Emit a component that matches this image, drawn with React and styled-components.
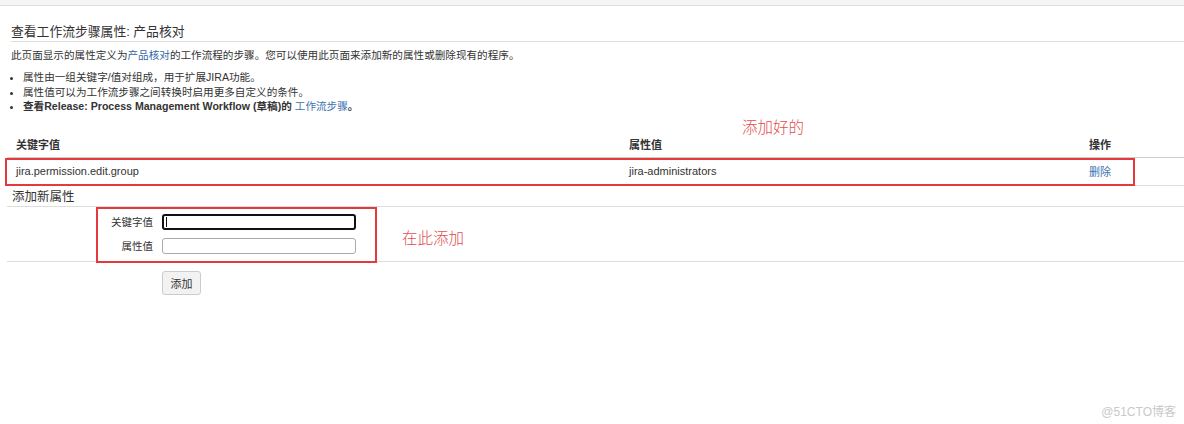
import React from "react";
import styled, { createGlobalStyle } from "styled-components";

const GlobalStyle = createGlobalStyle`
  html, body { margin: 0; padding: 0; background: #fff; }
  body {
    font-family: "Liberation Sans", Arial, "Noto Sans CJK SC", sans-serif;
    color: #333;
    font-size: 11px;
  }
  * { box-sizing: border-box; }
`;

const Screen = styled.div`
  position: relative;
  min-height: 424px;
  overflow: hidden;
`;

const TopBar = styled.div`
  height: 6px;
  background: #f4f4f4;
  border-bottom: 1px solid #dedede;
`;

const Content = styled.div`
  padding-left: 7px;
`;

const Title = styled.h2`
  margin: 17px 0 0 4px;
  font-size: 12.8px;
  font-weight: normal;
  line-height: 18px;
  color: #333;
  border-bottom: 1px solid #ddd;
`;

const Desc = styled.p`
  margin: 6px 0 0 4px;
  font-size: 10.6px;
  line-height: 14px;
`;

const Link = styled.a`
  color: ${(p) => (p.$dark ? "#2f66a8" : "#3b73af")};
  text-decoration: none;
  font-weight: normal;
`;

const List = styled.ul`
  margin: 8px 0 0 0;
  padding-left: 16px;
  font-size: 10.6px;
  line-height: 14.5px;
`;

const Item = styled.li`
  font-weight: ${(p) => (p.$bold ? "bold" : "normal")};
`;

const TableWrap = styled.div`
  position: relative;
  margin-top: 17px;
`;

const Row = styled.div`
  position: relative;
  display: grid;
  grid-template-columns: 614px 460px 1fr;
  height: ${(p) => (p.$head ? "27px" : "28px")};
  align-items: center;
  border-bottom: 1px solid ${(p) => (p.$head ? "#ccc" : "#ddd")};
`;

const Cell = styled.div`
  padding-left: ${(p) => (p.$first ? "9px" : "8px")};
  font-size: 11px;
  font-weight: ${(p) => (p.$head ? "bold" : "normal")};
  white-space: nowrap;
`;

const RedBox = styled.div`
  position: absolute;
  border: 2px solid #e6393e;
  pointer-events: none;
`;

const Note = styled.span`
  position: absolute;
  font-size: 15.5px;
  line-height: 20px;
  color: #e24c50;
  white-space: nowrap;
  font-family: "Noto Sans CJK SC", sans-serif;
  font-weight: 300;
`;

const SectionTitle = styled.h3`
  margin: 0;
  padding: 2px 0 0 5px;
  height: 21px;
  font-size: 12.5px;
  font-weight: normal;
  line-height: 18px;
  border-bottom: 1px solid #ddd;
`;

const Form = styled.div`
  position: relative;
  display: flex;
  flex-direction: column;
  gap: 8px;
  padding: 7px 0 7px;
  border-bottom: 1px solid #ddd;
`;

const FieldRow = styled.div`
  display: flex;
  align-items: center;
  gap: 9px;
`;

const Label = styled.label`
  width: 146px;
  text-align: right;
  font-size: 10.5px;
  line-height: 16px;
`;

const InputWrap = styled.div`
  position: relative;
  width: 194px;
  height: 16px;
`;

const Input = styled.input`
  width: 100%;
  height: 100%;
  margin: 0;
  padding: 0 4px;
  font: inherit;
  border: ${(p) => (p.$focused ? "2px solid #111" : "1px solid #aaa")};
  border-radius: 3px;
  outline: none;
  background: #fff;
`;

const Caret = styled.span`
  position: absolute;
  left: 4px;
  top: 3px;
  width: 1px;
  height: 10px;
  background: #111;
`;

const Actions = styled.div`
  padding: 9px 0 0 155px;
`;

const Button = styled.button`
  width: 39px;
  height: 24px;
  padding: 0;
  font-family: "Liberation Sans", "Noto Sans CJK SC", sans-serif;
  font-size: 11px;
  color: #333;
  background: #f2f2f2;
  border: 1px solid #ccc;
  border-radius: 3px;
`;

const Watermark = styled.div`
  position: absolute;
  right: 8px;
  bottom: 5px;
  font-size: 12px;
  color: #c9c9c9;
  font-family: "Liberation Sans", "Noto Sans CJK SC", sans-serif;
`;

export default function App() {
  return (
    <Screen>
      <GlobalStyle />
      <TopBar />
      <Content>
        <Title>查看工作流步骤属性: 产品核对</Title>
        <Desc>
          此页面显示的属性定义为<Link $dark href="#">产品核对</Link>的工作流程的步骤。您可以使用此页面来添加新的属性或删除现有的程序。
        </Desc>
        <List>
          <Item>属性由一组关键字/值对组成，用于扩展JIRA功能。</Item>
          <Item>属性值可以为工作流步骤之间转换时启用更多自定义的条件。</Item>
          <Item $bold>
            查看Release: Process Management Workflow (草稿)的{" "}
            <Link href="#">工作流步骤</Link>。
          </Item>
        </List>
        <TableWrap>
          <Note style={{ left: 735, top: -15 }}>添加好的</Note>
          <Row $head>
            <Cell $head $first>关键字值</Cell>
            <Cell $head>属性值</Cell>
            <Cell $head>操作</Cell>
          </Row>
          <Row>
            <Cell $first>jira.permission.edit.group</Cell>
            <Cell>jira-administrators</Cell>
            <Cell>
              <Link href="#">删除</Link>
            </Cell>
            <RedBox style={{ left: -2, top: 0, width: 1130, height: 28 }} />
          </Row>
        </TableWrap>
        <SectionTitle>添加新属性</SectionTitle>
        <Form>
          <FieldRow>
            <Label>关键字值</Label>
            <InputWrap>
              <Input $focused type="text" />
              <Caret />
            </InputWrap>
          </FieldRow>
          <FieldRow>
            <Label>属性值</Label>
            <InputWrap>
              <Input type="text" />
            </InputWrap>
          </FieldRow>
          <RedBox style={{ left: 89, top: 0, width: 281, height: 56 }} />
          <Note style={{ left: 395, top: 20 }}>在此添加</Note>
        </Form>
        <Actions>
          <Button>添加</Button>
        </Actions>
      </Content>
      <Watermark>@51CTO博客</Watermark>
    </Screen>
  );
}
